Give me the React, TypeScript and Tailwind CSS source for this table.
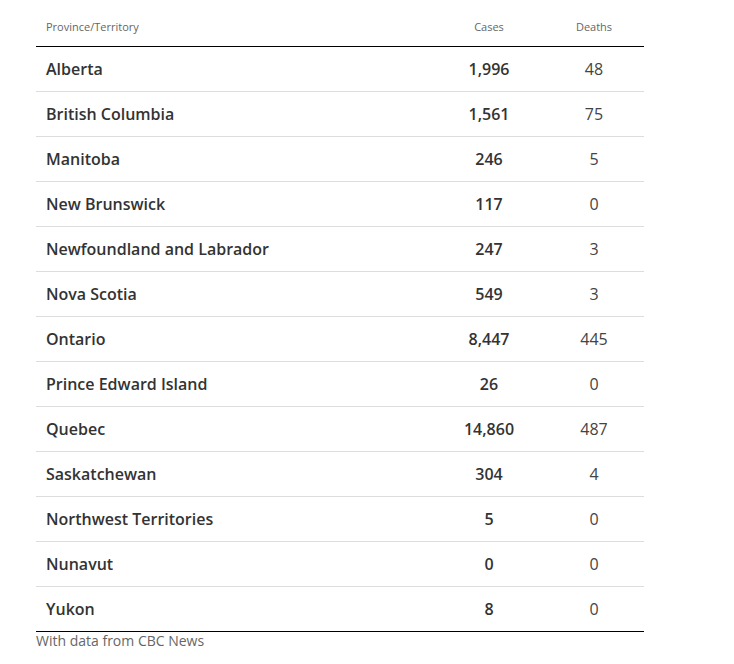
const rows: [string, string, string][] = [
  ["Alberta", "1,996", "48"],
  ["British Columbia", "1,561", "75"],
  ["Manitoba", "246", "5"],
  ["New Brunswick", "117", "0"],
  ["Newfoundland and Labrador", "247", "3"],
  ["Nova Scotia", "549", "3"],
  ["Ontario", "8,447", "445"],
  ["Prince Edward Island", "26", "0"],
  ["Quebec", "14,860", "487"],
  ["Saskatchewan", "304", "4"],
  ["Northwest Territories", "5", "0"],
  ["Nunavut", "0", "0"],
  ["Yukon", "8", "0"],
]

export default function App() {
  return (
    <div className="min-h-screen bg-white pl-[36px] font-['Open_Sans',sans-serif]">
      <div className="w-[608px]">
        {/* header */}
        <div className="grid h-[47px] grid-cols-[398px_110px_100px] items-center border-b border-black pt-[8px] text-[11px] text-[#666]">
          <div className="pl-[10px]">Province/Territory</div>
          <div className="text-center">Cases</div>
          <div className="text-center">Deaths</div>
        </div>

        {rows.map(([name, cases, deaths], i) => (
          <div
            key={name}
            className={`grid h-[45px] grid-cols-[398px_110px_100px] items-center text-[16px] text-[#333] ${
              i === rows.length - 1 ? "border-b border-black" : "border-b border-[#dddddd]"
            }`}
          >
            <div className="pl-[10px] font-semibold">{name}</div>
            <div className="text-center font-semibold">{cases}</div>
            <div className="text-center text-[#444]">{deaths}</div>
          </div>
        ))}

        <div className="text-[14px] leading-[18px] text-[#666]">With data from CBC News</div>
      </div>
    </div>
  )
}
